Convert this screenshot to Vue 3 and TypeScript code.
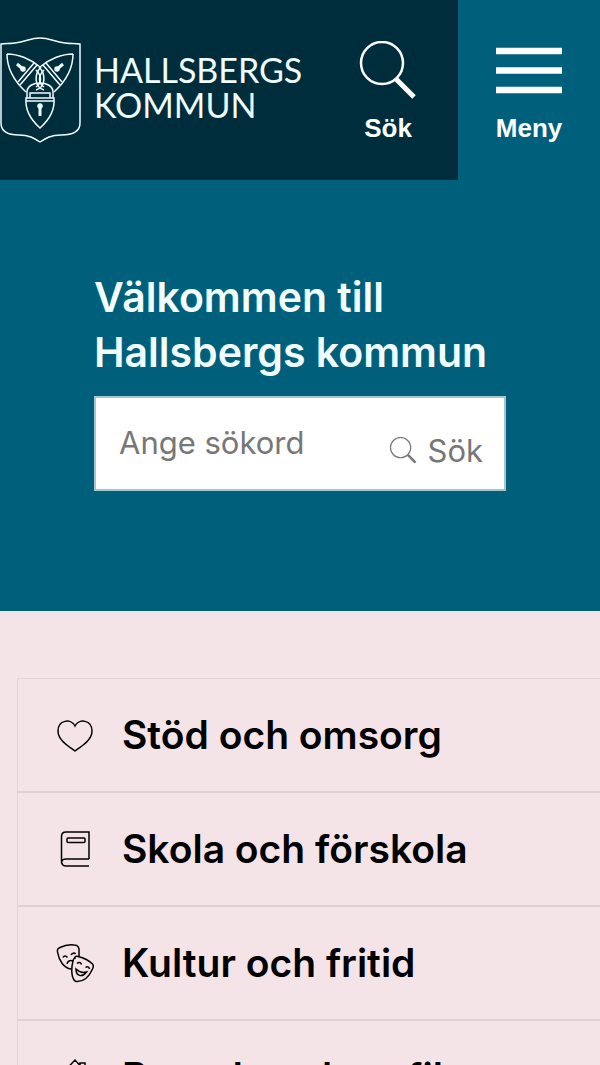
<script setup lang="ts">
import { ref } from 'vue'

interface Topic {
  label: string
  icon: 'heart' | 'book' | 'masks' | 'house'
}

const query = ref('')
const topics: Topic[] = [
  { label: 'Stöd och omsorg', icon: 'heart' },
  { label: 'Skola och förskola', icon: 'book' },
  { label: 'Kultur och fritid', icon: 'masks' },
  { label: 'Boende och trafik', icon: 'house' },
]
</script>

<template>
  <div class="page">
    <header class="top">
      <a class="brand" href="#">
        <svg class="crest" viewBox="0 0 82 108" aria-hidden="true">
          <path d="M40 2C30 2 26 6 15 7C9 8 5 7 1 8V87C1 96 9 99 19 99C29 99 34 102 40 106C46 102 51 99 61 99C71 99 80 96 80 87V8C75 7 71 8 65 7C54 6 50 2 40 2Z" />
          <path d="M26 62H54C55 73 49 84 40 92C31 84 25 73 26 62ZM26 65H54" />
          <path d="M27 62V56C27 44 53 44 53 56V62M30 62V57H50V62" />
          <path class="key" d="M40 70V80" />
          <circle class="dot" cx="40" cy="70" r="2" />
          <g v-for="side in ['left', 'right']" :key="side" :transform="side === 'right' ? 'translate(80 0) scale(-1 1)' : undefined">
            <path d="M7 18C18 18 31 23 40 31M7 18C7 32 14 45 26 56" />
            <path d="M34 27L18 46M37 29L20 49" />
            <path d="M39 31C46 38 46 51 36 54M36 34C42 40 42 47 36 51" />
            <path class="key" d="M17 28L24 34" />
            <circle class="dot" cx="23" cy="33" r="2" />
          </g>
        </svg>
        <span class="brand-name">
          <span>HALLSBERGS</span>
          <span>KOMMUN</span>
        </span>
      </a>
      <button class="tool" type="button">
        <svg class="lens" viewBox="0 0 58 58" aria-hidden="true">
          <circle cx="23" cy="22" r="21" stroke-width="2.5" />
          <path d="M37 38L55 56" stroke-width="5" />
        </svg>
        <span>Sök</span>
      </button>
      <button class="tool menu" type="button">
        <svg class="bars" viewBox="0 0 66 58" aria-hidden="true">
          <path d="M0 10H66M0 29.5H66M0 49H66" stroke-width="6.5" />
        </svg>
        <span>Meny</span>
      </button>
    </header>

    <main>
      <section class="hero">
        <h1>Välkommen till Hallsbergs kommun</h1>
        <form class="search" role="search" @submit.prevent>
          <input v-model="query" type="text" placeholder="Ange sökord" aria-label="Ange sökord" />
          <button type="submit">
            <svg viewBox="0 0 58 58" aria-hidden="true">
              <circle cx="24" cy="22" r="21" stroke-width="2.5" />
              <path d="M39 37L55 53" stroke-width="5" />
            </svg>
            <span>Sök</span>
          </button>
        </form>
      </section>

      <nav class="topics" aria-label="Ämnen">
        <a v-for="topic in topics" :key="topic.label" href="#" class="topic">
          <svg viewBox="0 0 40 40" aria-hidden="true">
            <path v-if="topic.icon === 'heart'" d="M20 36C13 31 3 25 3 16C3 5 16 3 20 11C24 3 37 5 37 16C37 25 27 31 20 36Z" />
            <g v-else-if="topic.icon === 'book'">
              <path d="M34 30V3H11C8 3 6.5 5 6.5 7.5V32C6.5 35 8 37 11 37H34M34 30H11C8 30 6.5 31 6.5 34" />
              <rect x="12" y="9" width="18" height="4.5" rx="1" />
            </g>
            <g v-else-if="topic.icon === 'masks'">
              <path d="M16 26C9 25 4 18 2.5 9C2 6 3 5.5 5 4.5C9 2.5 14 1.5 19 2C22 2 23.5 3 24 6V14" />
              <path d="M20 15C19.5 13.5 21 13 23 13.5C29 15 34 17.5 37.5 21C39 22.5 38.5 24 37.5 26C34 34 28 39 21 38.5C17 37 15.5 28 18 18C18.5 16 19 15 20 15Z" />
              <path d="M8 14.5C9 12.5 11 12.5 12.5 14.5M16 12C17 10 19.5 9.5 20.5 11M12 21C12.5 18 15 17 18 18" />
              <path d="M22 20.5C24 18.5 26 19.5 26.5 21.5M30.5 24.5C32.5 23 34 24 34.5 26M21 26C21 33 27 35 31.5 29C28 30 24 29 21 26Z" />
            </g>
            <path v-else d="M4 20L20 3L25 8.5V6H30V14L36 20M8 17V36H32V17M16 36V24H24V36" />
          </svg>
          <span>{{ topic.label }}</span>
        </a>
      </nav>
    </main>
  </div>
</template>

<style>
body {
  margin: 0;
  background: #f4e4e7;
}
</style>

<style scoped>
.page {
  height: 100vh;
  overflow: hidden;
  background: #f4e4e7;
  font-family: Inter, "Liberation Sans", sans-serif;
}
svg {
  fill: none;
  stroke: currentColor;
  flex: none;
}
button {
  border: 0;
  background: none;
  cursor: pointer;
}
.top {
  display: flex;
  height: 180px;
  background: #002d3c;
  color: #fff;
}
.brand {
  display: flex;
  flex: 1;
  gap: 12px;
  align-items: center;
  color: #f0fdff;
  text-decoration: none;
}
.crest {
  width: 82px;
  height: 108px;
  stroke-width: 1.5;
}
.key {
  stroke-width: 3;
}
.dot {
  fill: currentColor;
}
.brand-name {
  display: flex;
  flex-direction: column;
  padding-bottom: 6px;
  font: 34px/35px Lato, sans-serif;
}
.tool {
  display: flex;
  flex-direction: column;
  align-items: center;
  gap: 14px;
  width: 140px;
  padding: 41px 0 0;
  color: #fff;
  font: bold 26px/30px "Liberation Sans", sans-serif;
}
.menu {
  width: 142px;
  background: #00607b;
}
.lens {
  width: 58px;
  height: 58px;
}
.bars {
  width: 66px;
  height: 58px;
}
.hero {
  padding: 90px 94px 120px;
  background: #00607b;
}
h1 {
  margin: 0 0 16px;
  color: #f2fdff;
  font-size: 41px;
  font-weight: 600;
  line-height: 55px;
}
.search {
  display: flex;
  height: 91px;
  border: 2px solid #a3c6cf;
  background: #fff;
}
.search input {
  flex: 1;
  min-width: 0;
  padding: 0 0 2px 23px;
  border: 0;
  background: none;
  color: #333;
  font: 31px Inter, sans-serif;
}
.search input::placeholder {
  color: #777;
  opacity: 1;
}
.search button {
  display: flex;
  align-items: center;
  gap: 11px;
  padding: 14px 21px 0 0;
  color: #777;
  font: 31px Inter, sans-serif;
}
.search svg {
  width: 28px;
  height: 28px;
}
.topics {
  margin: 67px 0 0 17px;
  border: 1px solid #e2d4d8;
  border-width: 1px 0 0 1px;
}
.topic {
  display: flex;
  align-items: center;
  gap: 27px;
  box-sizing: border-box;
  height: 114px;
  padding-left: 37px;
  border-bottom: 2px solid #dfd0d4;
  color: #000;
  font-size: 39px;
  font-weight: 600;
  line-height: 54px;
  text-decoration: none;
  white-space: nowrap;
}
.topic svg {
  width: 40px;
  height: 40px;
  stroke-width: 1.5;
}
</style>
